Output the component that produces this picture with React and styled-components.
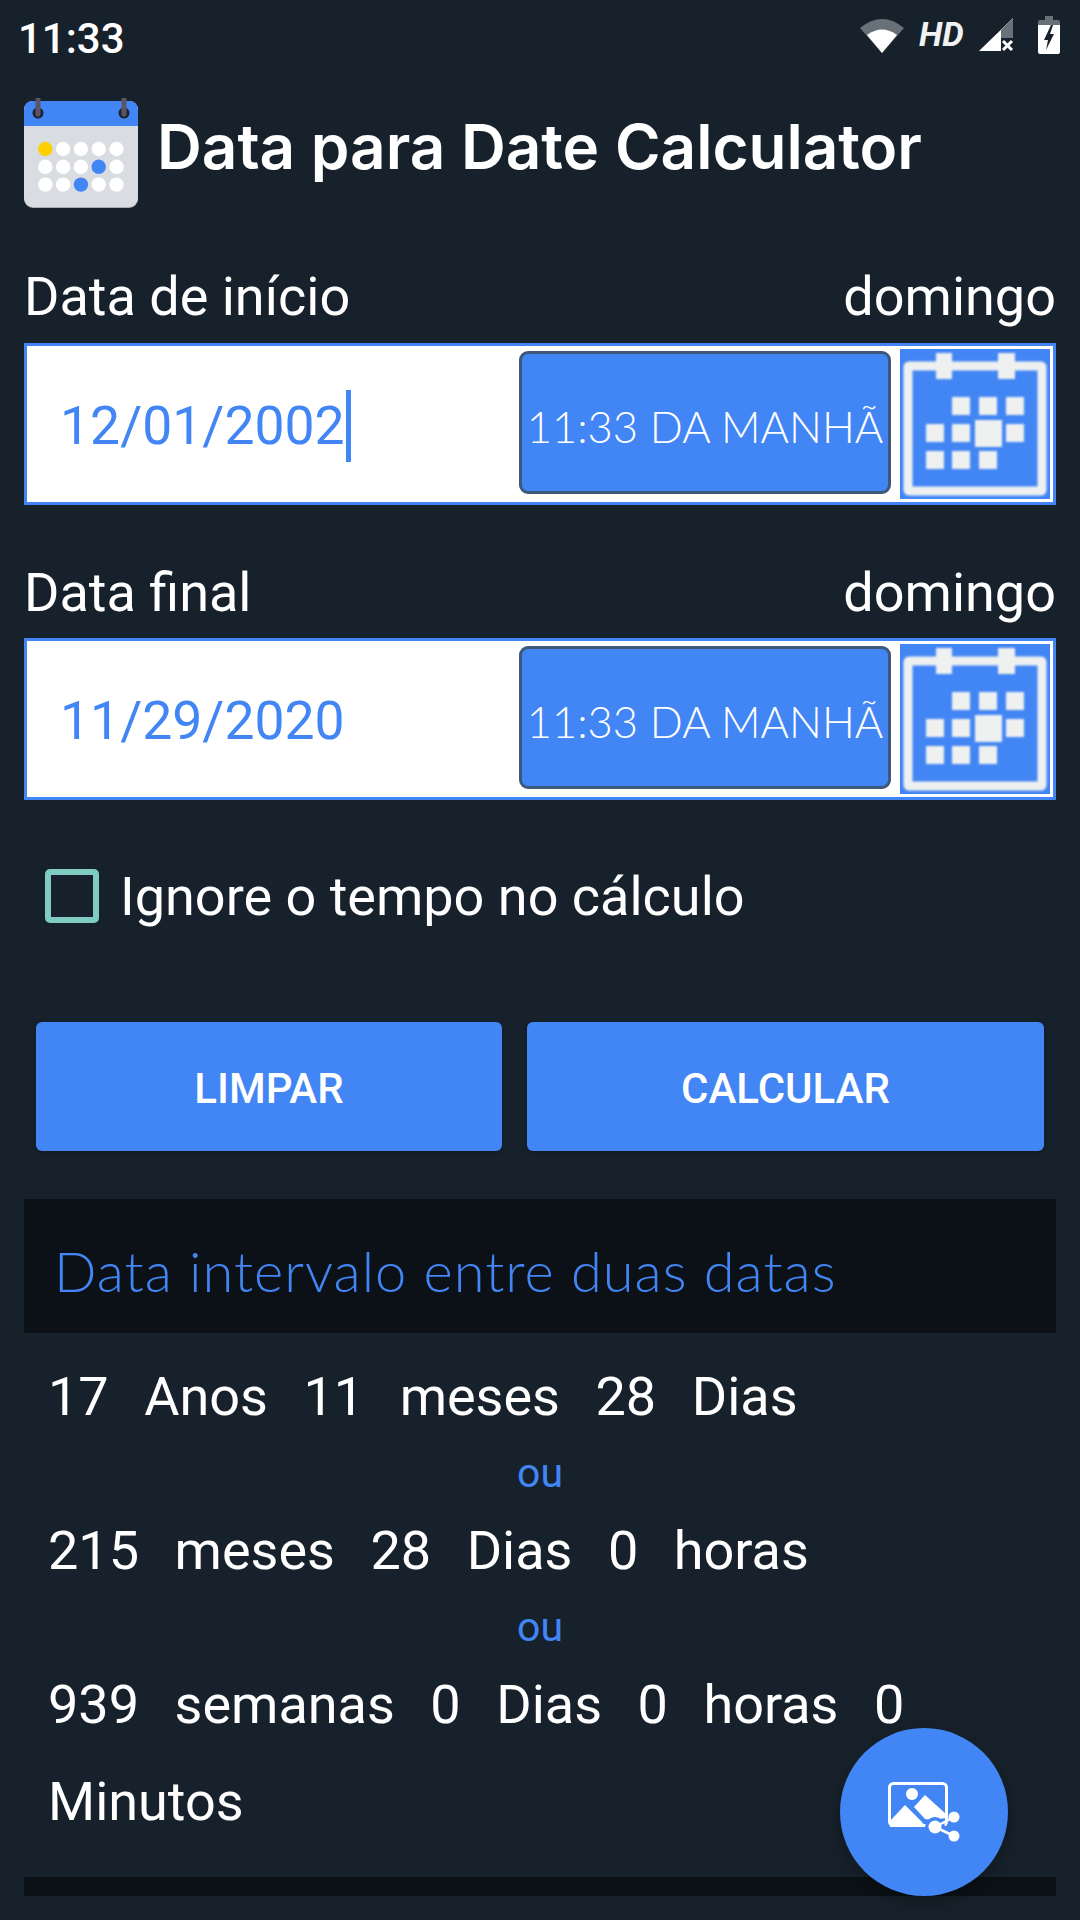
import styled, { createGlobalStyle } from "styled-components"

const BLUE = "#4285f4"
const BG = "#17212b"

const GlobalStyle = createGlobalStyle`
    html, body {
        margin: 0;
        padding: 0;
        background: ${BG};
    }
    * { box-sizing: border-box; }
`

const WifiIcon = () => (
    <svg width="46" height="37" viewBox="0 0 46 37">
        <path d="M23 36 L1 11 Q23 -7 45 11 Z" fill="#687078" strokeLinejoin="round" />
        <path d="M23 36 L8 18 Q23 7 38 18 Z" fill="#fff" />
    </svg>
)

const SignalIcon = () => (
    <svg width="35" height="34" viewBox="0 0 35 34">
        <path d="M34 0 V20 H22 V33 H0 Z" fill="#fff" />
        <path d="M34 0 V20 H22 V12 Z" fill="#687078" />
        <path d="M24 23 L33 32 M33 23 L24 32" stroke="#fff" strokeWidth="3" />
    </svg>
)

const BatteryIcon = () => (
    <svg width="22" height="38" viewBox="0 0 22 38">
        <path d="M7 0 H15 V4 H20 Q22 4 22 6 V9 H0 V6 Q0 4 2 4 H7 Z" fill="#687078" />
        <path d="M0 9 H22 V36 Q22 38 20 38 H2 Q0 38 0 36 Z" fill="#fff" />
        <path d="M13 9 L6 24 H10 L8 34 L16 18 H12 L15 9 Z" fill={BG} />
    </svg>
)

const dotRows = [
    ["#ffd000", "#fff", "#fff", "#fff", "#fff"],
    ["#fff", "#fff", "#fff", BLUE, "#fff"],
    ["#fff", "#fff", BLUE, "#fff", "#fff"],
]

const AppLogo = () => (
    <svg width="114" height="110" viewBox="0 0 114 110">
        <rect x="0" y="3" width="114" height="107" rx="9" fill="#a9adb3" />
        <rect x="0" y="3" width="114" height="106" rx="9" fill="#d9dce1" />
        <path d="M0 28 V12 Q0 3 9 3 H105 Q114 3 114 12 V28 Z" fill={BLUE} />
        <circle cx="14" cy="15" r="5.5" fill="#1d2530" />
        <circle cx="100" cy="15" r="5.5" fill="#1d2530" />
        <path d="M14 1 V16 M100 1 V16" stroke="#5c5566" strokeWidth="5" strokeLinecap="round" />
        {dotRows.map((row, r) =>
            row.map((color, c) => (
                <circle key={`${r}-${c}`} cx={21.3 + c * 17.8} cy={51 + r * 17.8} r="7.2" fill={color} />
            ))
        )}
    </svg>
)

const calendarCells = [
    [52, 48], [79, 48], [106, 48],
    [26, 75], [52, 75], [106, 75],
    [26, 102], [52, 102], [79, 102],
]

const CalendarIcon = () => (
    <CalendarSvg viewBox="0 0 150 150">
        <rect x="8" y="17" width="134" height="125" rx="1" fill="none" stroke="#eff1f1" strokeWidth="9" />
        <rect x="36" y="4" width="16" height="26" fill="#eff1f1" />
        <rect x="98" y="4" width="17" height="26" fill="#eff1f1" />
        {calendarCells.map(([x, y]) => (
            <rect key={`${x}-${y}`} x={x} y={y} width="18" height="18" fill="#eff1f1" />
        ))}
        <rect x="75" y="71" width="27" height="27" fill="#eff1f1" />
    </CalendarSvg>
)

const ShareImageIcon = () => (
    <svg width="72" height="60" viewBox="0 0 72 60">
        <rect x="1.5" y="1.5" width="57" height="42" rx="4" fill="none" stroke="#fff" strokeWidth="3" />
        <circle cx="24" cy="12" r="6" fill="#fff" />
        <path d="M2 39 L17 23 L33 39 L38 45 H2 Z" fill="#fff" />
        <path d="M26 25 L37 13 L58 32 V36 L44 38 L37 37 Z" fill="#fff" />
        <circle cx="47" cy="45" r="10" fill={BLUE} />
        <path d="M47 45 L66 35 M47 45 L66 54" stroke="#fff" strokeWidth="2.5" />
        <circle cx="47" cy="45" r="6.5" fill="#fff" />
        <circle cx="66" cy="35" r="5.5" fill="#fff" />
        <circle cx="66" cy="54" r="5.5" fill="#fff" />
    </svg>
)

const DateField = ({ value, focused }) => (
    <Field>
        <DateValue>
            {value}
            {focused && <Caret />}
        </DateValue>
        <TimeButton>11:33 DA MANHÃ</TimeButton>
        <CalendarButton>
            <CalendarIcon />
        </CalendarButton>
    </Field>
)

const ResultRow = ({ words }) => (
    <Row>
        {words.map((w, i) => (
            <span key={i}>{w}</span>
        ))}
    </Row>
)

const App = () => {
    return (
        <Screen>
            <GlobalStyle />
            <StatusBar>
                <Clock>11:33</Clock>
                <StatusIcons>
                    <WifiIcon />
                    <HdMark>HD</HdMark>
                    <SignalIcon />
                    <BatteryIcon />
                </StatusIcons>
            </StatusBar>

            <Header>
                <AppLogo />
                <Title>Data para Date Calculator</Title>
            </Header>

            <LabelRow>
                <span>Data de início</span>
                <span>domingo</span>
            </LabelRow>
            <DateField value="12/01/2002" focused />

            <LabelRow $second>
                <span>Data final</span>
                <span>domingo</span>
            </LabelRow>
            <DateField value="11/29/2020" />

            <CheckRow>
                <CheckBox />
                <span>Ignore o tempo no cálculo</span>
            </CheckRow>

            <Buttons>
                <ActionButton $width={466}>LIMPAR</ActionButton>
                <ActionButton $width={517}>CALCULAR</ActionButton>
            </Buttons>

            <ResultHeader>Data intervalo entre duas datas</ResultHeader>

            <Results>
                <ResultRow words={["17", "Anos", "11", "meses", "28", "Dias"]} />
                <Ou>ou</Ou>
                <ResultRow words={["215", "meses", "28", "Dias", "0", "horas"]} />
                <Ou>ou</Ou>
                <ResultRow words={["939", "semanas", "0", "Dias", "0", "horas", "0", "Minutos"]} />
            </Results>

            <BottomBar />

            <Fab>
                <ShareImageIcon />
            </Fab>
        </Screen>
    )
}

export default App

const Screen = styled.div`
    position: relative;
    width: 1080px;
    height: 1920px;
    overflow: hidden;
    padding: 0 24px;
    background: ${BG};
    color: #fff;
    font-family: Roboto, "Liberation Sans", sans-serif;
`

const StatusBar = styled.div`
    display: flex;
    justify-content: space-between;
    align-items: center;
    height: 70px;
    margin: 0 -24px;
    padding: 0 20px 0 18px;
`

const Clock = styled.span`
    padding-top: 7px;
    font-size: 42px;
    font-weight: 500;
    line-height: 74px;
`

const StatusIcons = styled.div`
    display: flex;
    align-items: center;
    gap: 14px;

    svg:last-child {
        margin-left: 10px;
    }
`

const HdMark = styled.span`
    margin-top: -2px;
    font-size: 34px;
    font-weight: 700;
    font-style: italic;
    color: #f0f1f2;
    width: 46px;
`

const Header = styled.header`
    display: flex;
    align-items: center;
    gap: 19px;
    height: 110px;
    margin-top: 28px;
`

const Title = styled.h1`
    margin: 0;
    font-family: Inter, "Noto Sans", sans-serif;
    font-size: 62px;
    font-weight: 600;
    white-space: nowrap;
    transform: translateY(-7px);
`

const LabelRow = styled.div`
    display: flex;
    justify-content: space-between;
    height: 60px;
    margin-top: ${(props) => (props.$second ? "58px" : "59px")};
    margin-bottom: ${(props) => (props.$second ? "15px" : "16px")};
    font-size: 54px;
    line-height: 60px;
`

const Field = styled.div`
    display: flex;
    align-items: center;
    height: 162px;
    border: 3px solid ${BLUE};
    background: #fff;
`

const DateValue = styled.div`
    display: flex;
    align-items: center;
    flex: 1;
    padding-left: 33px;
    padding-top: 3px;
    color: ${BLUE};
    font-size: 53.5px;
    line-height: 64px;
`

const Caret = styled.i`
    display: block;
    width: 5px;
    height: 72px;
    margin-left: 1px;
    background: ${BLUE};
`

const TimeButton = styled.div`
    display: flex;
    align-items: center;
    justify-content: center;
    width: 372px;
    height: 143px;
    margin-bottom: 4px;
    margin-right: 9px;
    padding-top: 7px;
    border: 3px solid #3d5878;
    border-radius: 9px;
    background: ${BLUE};
    font-family: Lato, Inter, sans-serif;
    font-size: 43.5px;
    font-weight: 300;
    white-space: nowrap;
`

const CalendarButton = styled.div`
    width: 150px;
    height: 150px;
    margin-right: 3px;
    background: ${BLUE};
`

const CalendarSvg = styled.svg`
    display: block;
    width: 150px;
    height: 150px;
    filter: blur(0.9px);
`

const CheckRow = styled.label`
    display: flex;
    align-items: center;
    gap: 21px;
    height: 54px;
    margin-top: 69px;
    padding-left: 21px;
    font-size: 54px;
`

const CheckBox = styled.span`
    width: 54px;
    height: 54px;
    border: 6px solid #80cbc4;
    border-radius: 5px;
`

const Buttons = styled.div`
    display: flex;
    gap: 25px;
    margin-top: 99px;
    padding: 0 12px;
`

const ActionButton = styled.button`
    width: ${(props) => props.$width}px;
    height: 129px;
    padding-top: 5px;
    border: none;
    border-radius: 6px;
    background: ${BLUE};
    color: #fff;
    font-family: Roboto, sans-serif;
    font-size: 42px;
    font-weight: 500;
    box-shadow: 0 2px 4px rgba(0, 0, 0, 0.2);
`

const ResultHeader = styled.div`
    display: flex;
    align-items: center;
    height: 134px;
    margin-top: 48px;
    padding-left: 30px;
    padding-top: 8px;
    background: #0b1116;
    color: ${BLUE};
    font-family: Lato, Inter, sans-serif;
    font-size: 56px;
    font-weight: 300;
    letter-spacing: 1px;
`

const Results = styled.div`
    margin-top: 34px;
    padding: 0 24px;
`

const Row = styled.div`
    display: flex;
    flex-wrap: wrap;
    column-gap: 35.5px;
    row-gap: 37px;
    font-size: 54px;
    line-height: 60px;
`

const Ou = styled.div`
    height: 94px;
    margin-left: -48px;
    margin-right: -48px;
    color: ${BLUE};
    font-size: 41px;
    line-height: 92px;
    text-align: center;
`

const BottomBar = styled.div`
    height: 19px;
    margin-top: 45px;
    background: #0b1116;
`

const Fab = styled.div`
    position: absolute;
    left: 840px;
    top: 1728px;
    display: flex;
    align-items: center;
    justify-content: center;
    width: 168px;
    height: 168px;
    border-radius: 50%;
    background: ${BLUE};
    box-shadow: 0 6px 16px rgba(0, 0, 0, 0.3);
`
